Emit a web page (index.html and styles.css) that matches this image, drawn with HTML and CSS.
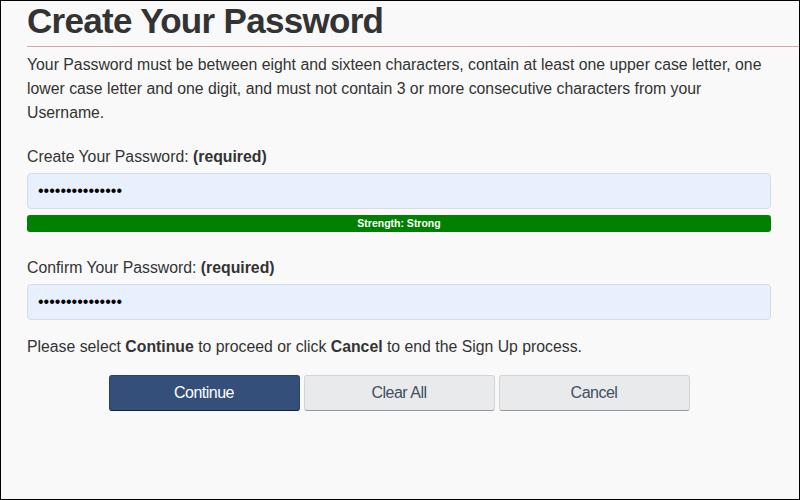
FILE: index.html
```html
<!DOCTYPE html>
<html lang="en">
<head>
    <meta charset="UTF-8">
    <meta name="viewport" content="width=device-width, initial-scale=1.0">
    <title>Create Your Password</title>
    <link rel="stylesheet" href="styles.css">
</head>
<body>
    <div class="frame">
        <h1 class="title">Create Your Password</h1>
        <hr class="rule">
        <p class="intro">Your Password must be between eight and sixteen characters, contain at least one upper case letter, one lower case letter and one digit, and must not contain 3 or more consecutive characters from your Username.</p>

        <label class="field-label" for="pw1">Create Your Password: <b>(required)</b></label>
        <input class="field" type="password" id="pw1" value="abcdefghijklmno">
        <div class="strength">Strength: Strong</div>

        <label class="field-label second" for="pw2">Confirm Your Password: <b>(required)</b></label>
        <input class="field" type="password" id="pw2" value="abcdefghijklmno">

        <p class="hint">Please select <b>Continue</b> to proceed or click <b>Cancel</b> to end the Sign Up process.</p>

        <div class="actions">
            <button class="btn primary">Continue</button>
            <button class="btn">Clear All</button>
            <button class="btn">Cancel</button>
        </div>
    </div>
</body>
</html>
```

FILE: styles.css
```css
body {
    margin: 0;
    font-family: "Liberation Sans", Arial, sans-serif;
    color: #333;
}

.frame {
    box-sizing: border-box;
    width: 800px;
    height: 500px;
    border: 1px solid #000;
    background-color: #f9f9f9;
    padding: 0 28px 0 26px;
    overflow: hidden;
}

.title {
    margin: 0;
    font-size: 35px;
    line-height: 40px;
    letter-spacing: -0.7px;
    color: #333;
}

.rule {
    margin: 5px -28px 0 0;
    border: none;
    border-top: 1px solid #d6a9a9;
    height: 0;
}

.intro {
    margin: 6px 0 0;
    font-size: 15.8px;
    line-height: 24px;
}

.field-label {
    display: block;
    margin-top: 20px;
    font-size: 15.8px;
    line-height: 24px;
}

.field-label.second {
    margin-top: 24px;
}

.field {
    display: block;
    box-sizing: border-box;
    width: 100%;
    height: 36px;
    margin-top: 4px;
    padding: 0 10px;
    background-color: #e8f0fe;
    border: 1px solid #d6dce6;
    border-radius: 4px;
    font-size: 16px;
    color: #000;
}

.strength {
    margin-top: 6px;
    height: 17px;
    line-height: 17px;
    background-color: #008000;
    border-radius: 3px;
    color: #fff;
    font-size: 10.5px;
    font-weight: bold;
    text-align: center;
}

.hint {
    margin: 15px 0 0;
    font-size: 15.8px;
    line-height: 24px;
}

.actions {
    display: flex;
    justify-content: center;
    gap: 4px;
    margin-top: 16px;
}

.btn {
    width: 191px;
    height: 36px;
    font-family: "Liberation Sans", Arial, sans-serif;
    font-size: 16px;
    letter-spacing: -0.5px;
    background-color: #e9eaec;
    color: #3f4e63;
    border: 1px solid #d2d4d8;
    border-bottom-color: #9a9a9a;
    border-radius: 3px;
    cursor: pointer;
}

.btn.primary {
    background-color: #34507a;
    color: #fff;
    border-color: #2b4266;
    border-bottom-color: #14223a;
}
```
